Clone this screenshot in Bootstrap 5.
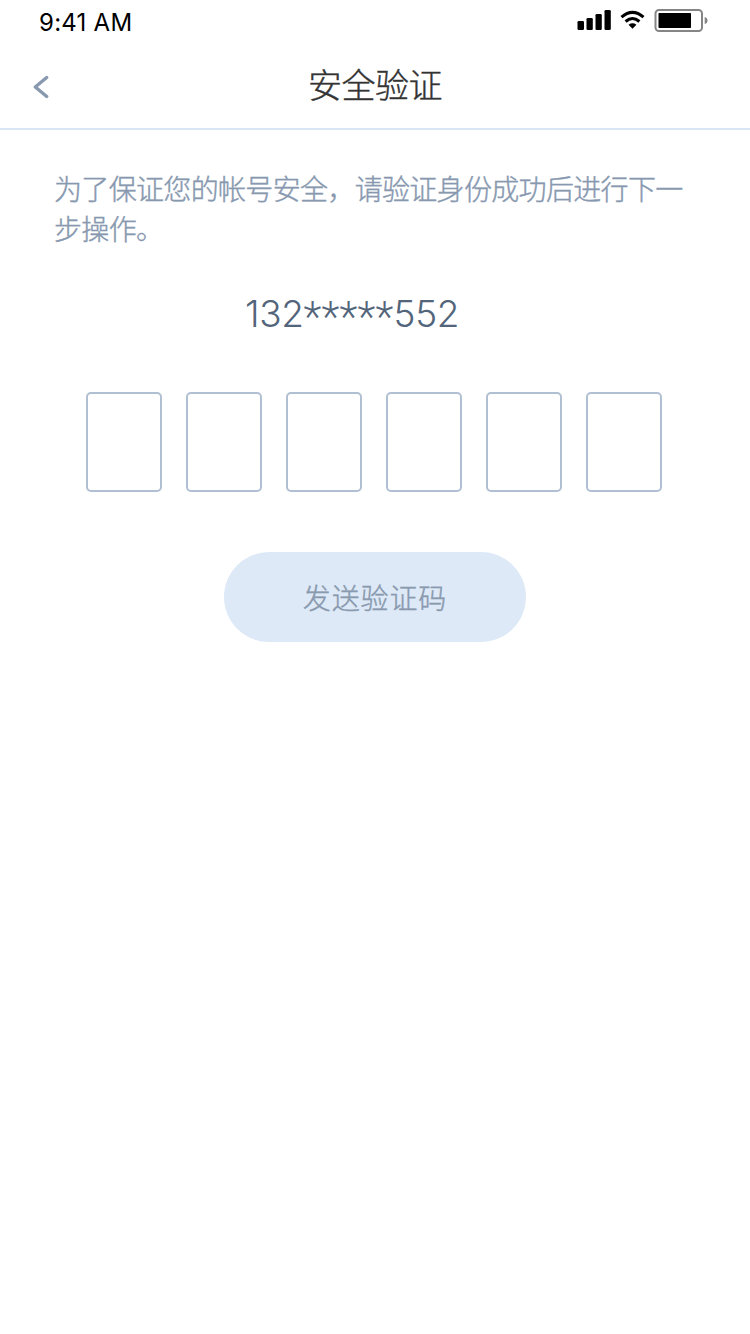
<!DOCTYPE html>
<html lang="zh-CN">
<head>
<meta charset="utf-8">
<meta name="viewport" content="width=device-width, initial-scale=1">
<title>安全验证</title>
<link href="https://cdn.jsdelivr.net/npm/bootstrap@5.3.0/dist/css/bootstrap.min.css" rel="stylesheet">
<style>
  body { font-family: "Noto Sans CJK SC", sans-serif; font-weight: 300; background: #fff; min-height: 1334px; }
  .page-title, .hint, .send { -webkit-text-stroke: .4px currentColor; }
  .status-bar { height: 44px; padding: 0 42px 0 39px; color: #000; }
  .clock { font: 400 24px/46px Inter, sans-serif; letter-spacing: .25px; }
  .title-bar { height: 86px; border-bottom: 2px solid #d9e4f4; }
  .back { width: 64px; padding-left: 33px; }
  .page-title { font-size: 34px; line-height: 80px; letter-spacing: -.5px; color: #333; padding-right: 64px; font-weight: 300; }
  .hint { padding: 38px 54px 0; font-size: 28px; line-height: 40px; letter-spacing: -.67px; color: #8798af; }
  .phone { font: 300 37px/52px Inter, sans-serif; color: #53657b; margin: 40px 0 0 245px; height: 52px; letter-spacing: -.4px; }
  .stars { font-family: Roboto, sans-serif; font-weight: 300; font-size: 42px; line-height: 57px; letter-spacing: .2px; }
  .code-row { gap: 24px; padding-left: 86px; margin-top: 52px; }
  .code-box { width: 76px; height: 100px; border: 2px solid #b1bfd3; border-radius: 5px; padding: 0; }
  .send { width: 302px; height: 90px; margin-top: 60px; background: #dde9f7; color: #8999ae; font-size: 28px; font-weight: 300; letter-spacing: .9px; border: 0; }
  .send:hover { background: #dde9f7; color: #8999ae; }
</style>
</head>
<body>
<div class="status-bar d-flex justify-content-between align-items-start">
  <span class="clock">9:41 AM</span>
  <svg width="131" height="24" viewBox="577 9 131 24" style="margin-top:9px" aria-hidden="true">
    <rect x="577.5" y="21" width="6.5" height="9" rx="1.3"/>
    <rect x="586.5" y="18" width="6.3" height="12" rx="1.3"/>
    <rect x="595.5" y="14" width="6.3" height="16" rx="1.3"/>
    <rect x="604.5" y="10" width="6.3" height="20" rx="1.3"/>
    <g fill="none" stroke="#000" stroke-width="3"><path d="M621.5 17.2Q632.5 7.6 643.5 17.2"/><path d="M625.6 21.5Q632.5 15.5 639.4 21.5"/></g>
    <path d="M628.6 24.8Q632.5 21.9 636.4 24.8L632.5 28.8Z"/>
    <rect x="655.5" y="10" width="46.5" height="21" rx="3.5" fill="none" stroke="#858585" stroke-width="2"/>
    <rect x="658.5" y="13" width="32.5" height="15" rx=".8"/>
    <path d="M704.7 17Q707.5 17.5 707.5 20.5T704.7 24Z" fill="#858585"/>
  </svg>
</div>
<header class="title-bar d-flex">
  <a class="back" href="#" aria-label="返回">
    <svg width="16" height="24" viewBox="33 75 16 24" style="margin-top:31px" class="d-block"><path d="M46.7 77.5L35.3 87L46.7 96.5" fill="none" stroke="#8798af" stroke-width="3.3" stroke-linecap="round" stroke-linejoin="round"/></svg>
  </a>
  <h1 class="page-title flex-grow-1 text-center m-0">安全验证</h1>
</header>
<main>
  <p class="hint m-0">为了保证您的帐号安全，请验证身份成功后进行下一步操作。</p>
  <div class="phone d-flex">132<span class="stars">*****</span>552</div>
  <form>
    <div class="code-row d-flex">
      <input class="code-box" maxlength="1" aria-label="1">
      <input class="code-box" maxlength="1" aria-label="2">
      <input class="code-box" maxlength="1" aria-label="3">
      <input class="code-box" maxlength="1" aria-label="4">
      <input class="code-box" maxlength="1" aria-label="5">
      <input class="code-box" maxlength="1" aria-label="6">
    </div>
    <button type="button" class="send btn rounded-pill d-block mx-auto">发送验证码</button>
  </form>
</main>
<script src="https://cdn.jsdelivr.net/npm/bootstrap@5.3.0/dist/js/bootstrap.bundle.min.js"></script>
</body>
</html>
